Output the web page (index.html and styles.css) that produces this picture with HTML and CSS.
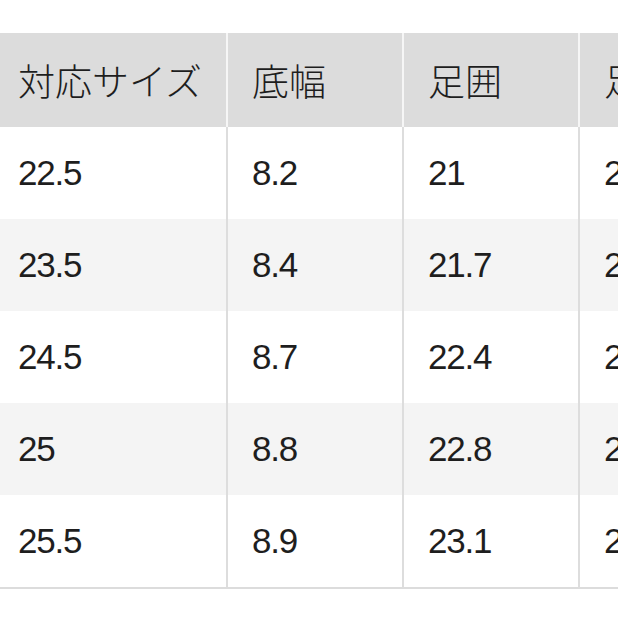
FILE: index.html
```html
<!DOCTYPE html>
<html lang="ja">
<head>
<meta charset="utf-8">
<link rel="stylesheet" href="styles.css">
</head>
<body>
<div class="viewport">
  <table class="size-table">
    <thead>
      <tr>
        <th class="c1">対応サイズ</th>
        <th class="c2">底幅</th>
        <th class="c3">足囲</th>
        <th class="c4">足長</th>
      </tr>
    </thead>
    <tbody>
      <tr><td>22.5</td><td>8.2</td><td>21</td><td>22.5</td></tr>
      <tr class="alt"><td>23.5</td><td>8.4</td><td>21.7</td><td>23.5</td></tr>
      <tr><td>24.5</td><td>8.7</td><td>22.4</td><td>24.5</td></tr>
      <tr class="alt"><td>25</td><td>8.8</td><td>22.8</td><td>25</td></tr>
      <tr><td>25.5</td><td>8.9</td><td>23.1</td><td>25.5</td></tr>
    </tbody>
  </table>
</div>
</body>
</html>
```

FILE: styles.css
```css
html, body {
  margin: 0;
  padding: 0;
  background: #ffffff;
  overflow: hidden;
}

.viewport {
  width: 618px;
  height: 618px;
  overflow: hidden;
  padding-top: 33px;
  box-sizing: border-box;
}

.size-table {
  border-collapse: separate;
  border-spacing: 0;
  table-layout: fixed;
  width: 756px;
  color: #1e1e1e;
  border-bottom: 2px solid #dcdcdc;
}

.size-table th,
.size-table td {
  box-sizing: border-box;
  text-align: left;
  vertical-align: middle;
  padding: 0 0 0 24px;
  white-space: nowrap;
  overflow: hidden;
}

.size-table th:first-child,
.size-table td:first-child {
  padding-left: 18px;
}

.size-table th {
  height: 94px;
  background: #dcdcdc;
  font-family: "Noto Sans CJK JP", sans-serif;
  font-weight: 300;
  font-size: 37px;
  border-right: 2px solid #f6f6f6;
}

.size-table td {
  height: 92px;
  font-family: "Liberation Sans", "Noto Sans CJK JP", sans-serif;
  font-size: 35px;
  letter-spacing: -1.2px;
  border-right: 2px solid #dddddd;
}

.size-table .c1 { width: 228px; }
.size-table .c2 { width: 176px; }
.size-table .c3 { width: 176px; }
.size-table .c4 { width: 176px; }

.size-table tr.alt td {
  background: #f4f4f4;
}
```
